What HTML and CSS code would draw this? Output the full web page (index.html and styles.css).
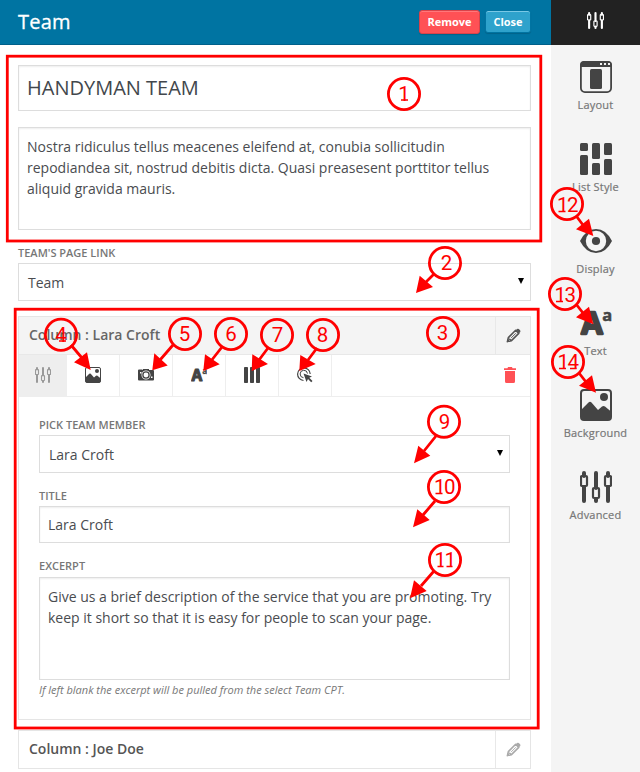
FILE: index.html
```html
<!DOCTYPE html>
<html lang="en">
<head>
<meta charset="utf-8">
<title>Team</title>
<link rel="stylesheet" href="styles.css">
</head>
<body>
<svg class="defs" width="0" height="0" aria-hidden="true">
  <symbol id="sliders" viewBox="0 0 32 32">
    <g fill="none" stroke="currentColor" stroke-width="4" stroke-linecap="round"><path d="M4 2v3M4 16v14M16 2v15M16 28v2M28 2v3M28 16v14"/></g>
    <g fill="none" stroke="currentColor" stroke-width="2.200"><rect x="1" y="5" width="6" height="10" rx="1"/><rect x="13" y="17" width="6" height="10" rx="1"/><rect x="25" y="5" width="6" height="10" rx="1"/></g>
  </symbol>
  <symbol id="picture" viewBox="0 0 32 32">
    <rect x="1" y="1" width="30" height="30" rx="3" fill="none" stroke="currentColor" stroke-width="2"/>
    <circle cx="24" cy="8" r="4" fill="currentColor"/>
    <path fill="currentColor" d="M1 21l7.500-7.500q1.500-1.500 3 0L18 21l4-3.500q1.500-1.200 3 0l6 5V29q0 2-2 2H3q-2 0-2-2z"/>
  </symbol>
  <symbol id="type" viewBox="0 0 32 32">
    <g fill="currentColor" stroke="currentColor" stroke-linejoin="round" font-family="Open Sans" font-weight="700"><text x="1.200" y="27" font-size="31" stroke-width="2.300">A</text><text x="22.300" y="14" font-size="16.500" stroke-width=".5">a</text></g>
  </symbol>
  <symbol id="pencil" viewBox="0 0 16 16">
    <path fill="none" stroke="currentColor" stroke-width="1.700" stroke-linejoin="round" d="M1.500 14.500l1-4.300 7.800-7.800 3.300 3.300-7.800 7.800zM3.500 11.500l1.700 1.700"/>
    <path fill="currentColor" d="M.8 15.200l.9-3.700 2.800 2.800zM10.500 2.300l1.200-1.200q1-.8 2 0l1.300 1.300q.8 1 0 2l-1.200 1.200z"/>
    <path stroke="currentColor" d="M5.500 10.600l5-5"/>
  </symbol>
</svg>

<div class="app">
  <main class="editor">
    <header class="topbar">
      <h1>Team</h1>
      <button class="btn remove">Remove</button>
      <button class="btn close">Close</button>
    </header>
    <div class="content">
      <div class="field heading">HANDYMAN TEAM</div>
      <div class="field area">Nostra ridiculus tellus meacenes eleifend at, conubia sollicitudin repodiandea sit, nostrud debitis dicta. Quasi preasesent porttitor tellus aliquid gravida mauris.</div>
      <div class="label link-label">TEAM'S PAGE LINK</div>
      <div class="field select"><span>Team</span><svg class="caret" viewBox="0 0 6 6"><path d="M0 0h6L3 6z"/></svg></div>

      <section class="panel">
        <div class="panel-head"><span>Column : Lara Croft</span><span class="edit"><svg><use href="#pencil"/></svg></span></div>
        <div class="tabs">
          <span class="tab active"><svg><use href="#sliders"/></svg></span>
          <span class="tab"><svg><use href="#picture"/></svg></span>
          <span class="tab"><svg viewBox="0 0 16 16"><path fill="currentColor" fill-rule="evenodd" d="M1 2.500h3l1 .5V2h6v1h4q1 0 1 1v8.500q0 1-1 1H1q-1 0-1-1V3.500q0-1 1-1zM8 3.500a4.500 4.500 0 1 0 0 9 4.500 4.500 0 0 0 0-9zM2 5v1.500h1.500V5zM13 9.500V11h1.500V9.500z"/><circle cx="8" cy="8" r="3.100" fill="none" stroke="currentColor" stroke-width="1.300"/></svg></span>
          <span class="tab"><svg><use href="#type"/></svg></span>
          <span class="tab"><svg viewBox="0 0 16 16" fill="currentColor"><rect width="4" height="16" rx=".8"/><rect x="6" width="4" height="16" rx=".8"/><rect x="12" width="4" height="16" rx=".8"/></svg></span>
          <span class="tab"><svg viewBox="0 0 16 16"><g fill="none" stroke="currentColor"><path d="M6.500 13.500A6.300 6.300 0 1 1 13.200 7" stroke-width="1.200"/><path d="M6.500 10.700A3.700 3.700 0 1 1 10.500 6.500"/></g><path fill="currentColor" d="M6.500 6.500l8.500 3-2.700 1.300 3.200 3.200-1.300 1.300-3.200-3.200L9.500 15z"/></svg></span>
          <span class="trash"><svg viewBox="0 0 12 16" fill="currentColor"><path d="M0 1.200h3.500L4 0h4l.5 1.200H12V3H0zM1 4h10v10.500q0 1.500-1.500 1.500h-7Q1 16 1 14.500z"/></svg></span>
        </div>
        <div class="panel-body">
          <div class="label">PICK TEAM MEMBER</div>
          <div class="field select"><span>Lara Croft</span><svg class="caret" viewBox="0 0 6 6"><path d="M0 0h6L3 6z"/></svg></div>
          <div class="label gap">TITLE</div>
          <div class="field text">Lara Croft</div>
          <div class="label gap">EXCERPT</div>
          <div class="field area">Give us a brief description of the service that you are promoting. Try keep it short so that it is easy for people to scan your page.</div>
          <p class="help">If left blank the excerpt will be pulled from the select Team CPT.</p>
        </div>
      </section>
      <section class="panel closed">
        <div class="panel-head"><span>Column : Joe Doe</span><span class="edit"><svg><use href="#pencil"/></svg></span></div>
      </section>
    </div>
  </main>

  <aside class="sidebar">
    <div class="side-top"><svg><use href="#sliders"/></svg></div>
    <nav>
      <div class="item"><svg viewBox="0 0 32 32"><rect x=".9" y=".9" width="30.200" height="30.200" rx="4" fill="none" stroke="currentColor" stroke-width="1.800"/><path fill="currentColor" d="M0 6V4q0-4 4-4h24q4 0 4 4v2z"/><rect x="10" y="8" width="12" height="20" rx="1.500" fill="currentColor"/><path fill="#f4f4f4" d="M20 2h2v2h-2zM24 2h2v2h-2zM28 2h2v2h-2z"/></svg><span>Layout</span></div>
      <div class="item"><svg viewBox="0 0 32 32" fill="currentColor"><rect width="8" height="8" rx="1.500"/><rect y="12" width="8" height="20" rx="1.500"/><rect x="12" width="8" height="16" rx="1.500"/><rect x="12" y="20" width="8" height="12" rx="1.500"/><rect x="24" width="8" height="12" rx="1.500"/><rect x="24" y="16" width="8" height="16" rx="1.500"/></svg><span>List Style</span></div>
      <div class="item"><svg viewBox="0 0 32 32" fill="currentColor"><path fill-rule="evenodd" d="M0 16Q6 4 16 4t16 12q-6 12-16 12T0 16zM16 5.800a10.200 10.200 0 1 0 0 20.400 10.200 10.200 0 0 0 0-20.400z"/><circle cx="16" cy="16" r="4.100"/></svg><span>Display</span></div>
      <div class="item"><svg><use href="#type"/></svg><span>Text</span></div>
      <div class="item"><svg><use href="#picture"/></svg><span>Background</span></div>
      <div class="item"><svg><use href="#sliders"/></svg><span>Advanced</span></div>
    </nav>
  </aside>

  <svg class="callouts" viewBox="0 0 640 772">
    <g class="outline">
      <rect x="7.300" y="56.200" width="533.500" height="184.800"/>
      <rect x="15.200" y="309.200" width="523" height="418.800"/>
    </g>
    <g class="line">
      <circle cx="404" cy="94" r="15.600"/><circle cx="445" cy="263" r="15.600"/><circle cx="443" cy="333" r="15.600"/><circle cx="61" cy="334.700" r="15.600"/><circle cx="185" cy="334" r="15.600"/><circle cx="231" cy="334" r="15.600"/><circle cx="277" cy="335" r="15.600"/><circle cx="323" cy="335" r="15.600"/><circle cx="444" cy="421.700" r="15.600"/><circle cx="444" cy="487" r="15.600"/><circle cx="445" cy="560" r="15.600"/><circle cx="567" cy="204" r="15.600"/><circle cx="565" cy="294" r="15.600"/><circle cx="568" cy="362" r="15.600"/>
      <path d="M434 274l-9 9M71 345l11 13M173 345l-13 15M222 347l-11 14M268 348l-9 12M317 348l-9 12M436 436l-12 15M435 501l-12 14M434 571l-13 15M577 217l6 8M576 304l7 9M579 373l7 9"/>
    </g>
    <path class="heads" d="M416 293l3.700-17.300L433 287zM90.700 370L74 362.300l13-10zM152.300 370.300l2-17 13.400 12.200zM203.300 371l1.700-16.700 14.700 10zM251.700 371l.6-16.700L268 364zM299.300 371l1-16 15.400 9zM414 463.300l4.300-17.600 12 10zM413 527.300l4.300-18 12.400 10.700zM410 598.300l4-18L426.700 591zM593.300 236L576 229.300l13-10.600zM593.300 324.300l-17.300-7 13-10.600zM596 392.700l-17-7 13-10.400z"/>
    <g class="numbers">
      <text x="404" y="100.500">1</text><text x="446.500" y="270">2</text><text x="442.500" y="340">3</text><text x="61" y="341.500">4</text><text x="184.500" y="341">5</text><text x="231" y="341">6</text><text x="277.500" y="342">7</text><text x="322.500" y="342">8</text><text x="444.500" y="429">9</text><text class="two" x="444" y="494">10</text><text class="two" x="444.500" y="567">11</text><text class="two" x="567" y="212">12</text><text class="two" x="564.500" y="302">13</text><text class="two" x="567.500" y="369">14</text>
    </g>
    <path class="feet" d="M401 100h7M59 341h7M435.500 493.500h7M437.500 566.500h6M446.500 566.500h6M558.500 211.500h7M556 301.500h7M559 368.500h7M570 368.500h6.500"/>
  </svg>
</div>
</body>
</html>
```
FILE: styles.css
```css
* { box-sizing: border-box; }
body { margin: 0; background: #fff; font-family: "Open Sans", sans-serif; color: #444; }
.defs { position: absolute; }
.app { position: relative; display: flex; width: 640px; height: 772px; overflow: hidden; }
.editor { width: 551px; }
.topbar { display: flex; align-items: center; height: 45px; padding: 0 20px 1px 18px; background: #0074a2; border-bottom: 1px solid #00608a; }
h1 { margin: 0 auto 0 0; font-size: 20px; font-weight: 500; line-height: 28px; letter-spacing: .2px; -webkit-text-stroke: .3px #fff; color: #fff; }
.btn { height: 24px; padding: 0; border: 1px solid #d9434a; border-radius: 3px; font: 700 11px/20px "Open Sans", sans-serif; color: #fff; }
.remove { width: 61px; background: #ff5155; box-shadow: 0 1px 1px rgba(0,0,0,.15), inset 0 1px #ff777a; }
.close { width: 46px; height: 23px; margin-left: 5px; background: #2ea2cc; border-color: #0074a2; box-shadow: 0 1px 1px rgba(0,0,0,.15), inset 0 1px #78c8e6; }
.content { padding: 20px 20px 0 18px; }
.field { border: 1px solid #ddd; background: #fff; box-shadow: inset 0 1px 2px rgba(0,0,0,.07); font-size: 14px; color: #4a4c50; padding: 0 8px; }
.heading { height: 46px; font-size: 20px; font-weight: 400; line-height: 44px; color: #42474c; }
.area { height: 103px; padding-top: 8px; line-height: 21px; }
.heading + .area { margin-top: 16px; }
.label { height: 20px; font-size: 11px; font-weight: 600; line-height: 20px; color: #777; }
.link-label { margin-top: 13px; }
.select { display: flex; justify-content: space-between; align-items: center; height: 38px; padding: 0 6px 0 9px; box-shadow: none; }
.caret { width: 6px; height: 6px; margin-bottom: 2px; fill: #000; }
.panel { margin-top: 15px; height: 404px; border: 1px solid #e5e5e5; }
.panel-head { display: flex; justify-content: space-between; align-items: center; height: 38px; padding-left: 10px; background: #f4f4f4; border-bottom: 1px solid #e8e8e8; font-size: 14px; font-weight: 600; color: #666; }
.panel-head > span:first-child { padding-bottom: 2px; }
.edit { display: flex; align-items: center; justify-content: center; width: 35px; height: 37px; border-left: 1px solid #e8e8e8; color: #555; }
.edit svg { width: 15px; height: 15px; }
.tabs { display: flex; height: 42px; border-bottom: 1px solid #eee; }
.tab { display: flex; align-items: center; justify-content: center; width: 53px; padding-bottom: 1px; border-right: 1px solid #eee; color: #444; }
.tab svg { width: 16px; height: 16px; }
.active { width: 48px; background: #eee; color: #999; }
.trash { display: flex; align-items: center; margin: 0 14px 1px auto; color: #ff5155; }
.trash svg { width: 12px; height: 16px; }
.panel-body { padding: 18px 20px 0; }
.gap { margin-top: 13px; }
.text { height: 37px; line-height: 35px; }
.text + .gap { height: 21px; }
.help { margin: 0; font-size: 11px; font-style: italic; line-height: 20px; color: #777; }
.closed { height: 39px; margin-top: 10px; }
.closed .panel-head { height: 37px; background: #fff; border: 0; color: #555; }
.closed .edit { color: #aaa; }
.sidebar { width: 89px; background: #f4f4f4; color: #444; }
.side-top { display: flex; align-items: center; justify-content: center; height: 45px; padding-bottom: 5px; background: #222; color: #fff; }
.side-top svg { width: 17px; height: 17px; }
nav { padding-top: 16px; }
.item { display: flex; flex-direction: column; align-items: center; gap: 2px; height: 82px; }
.item svg { width: 32px; height: 32px; flex: none; }
.item span { font-size: 11px; font-weight: 500; line-height: 20px; letter-spacing: .2px; -webkit-text-stroke: .2px #777; color: #777; white-space: nowrap; }
.callouts { position: absolute; top: 0; left: 0; width: 640px; height: 772px; pointer-events: none; }
.outline, .line { fill: none; stroke: #f00; stroke-width: 2.8; }
.heads { fill: #f00; }
.numbers { fill: #f00; font: 400 20.5px Roboto, sans-serif; text-anchor: middle; }
.two { letter-spacing: -1.5px; }
.feet { fill: none; stroke: #f00; stroke-width: 1.4; }
```
